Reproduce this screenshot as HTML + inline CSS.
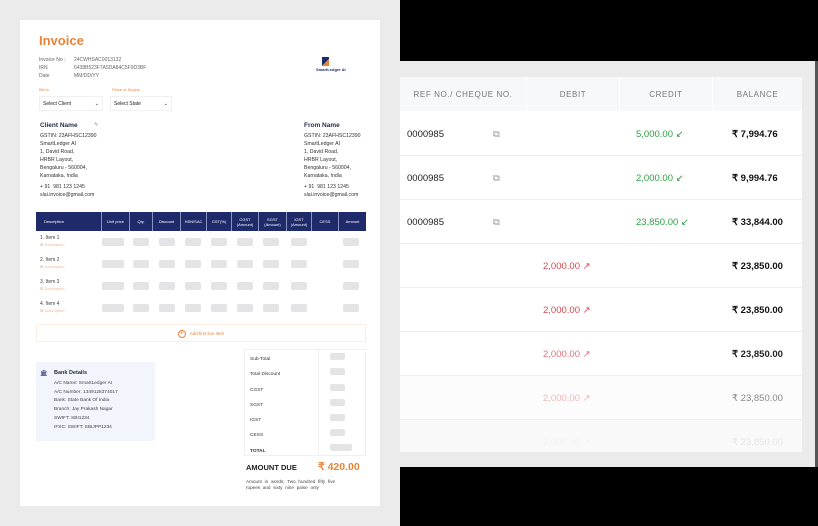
<!DOCTYPE html>
<html><head><meta charset="utf-8"><style>
*{margin:0;padding:0;box-sizing:border-box}
body{width:818px;height:526px;background:#ebebeb;position:relative;overflow:hidden;font-family:"Liberation Sans",sans-serif}
.a{position:absolute;white-space:nowrap}
.card{position:absolute;left:20px;top:20px;width:360px;height:486px;background:#fff}
.g{color:#666;font-size:5px}
.t{color:#333;font-size:5.2px;line-height:8px}
.ph{position:absolute;height:8px;background:#e4e4e6;border-radius:2px}
.th{position:absolute;top:0;height:19px;color:#fff;font-size:4px;text-align:center;display:flex;align-items:center;justify-content:center;border-left:1px solid #8a92c0;line-height:5px}
.rt{position:absolute;left:400px;top:77px;width:402px;background:#fff}
.hd{position:absolute;top:0;height:34px;background:#f7f8fa;color:#777;font-size:8px;letter-spacing:0.6px;display:flex;align-items:center;justify-content:center}
.row{position:absolute;left:0;width:402px;height:44px;border-bottom:1px solid #eceef0;font-size:9.5px}
.row span{position:absolute;top:17px}
</style></head><body>
<div class="a" style="left:400px;top:0;width:418px;height:61px;background:#000"></div>
<div class="a" style="left:400px;top:467px;width:418px;height:59px;background:#000"></div>
<div class="a" style="left:815px;top:61px;width:3px;height:406px;background:#555"></div>

<div class="card">
<div class="a" style="left:19px;top:13px;font-size:13px;font-weight:bold;color:#e8843a">Invoice</div>
<div class="a g" style="left:19px;top:36px;line-height:8px">Invoice No :<br>IRN<br>Date</div>
<div class="a g" style="left:54px;top:36px;line-height:8px">24CWHSAC0013132<br>6438B523F7A5DA84C5F9D3BF<br>MM/DD/YY</div>
<div class="a" style="left:302px;top:37px;width:7px;height:9px;background:linear-gradient(135deg,#1f2a6b 55%,#e8843a 55%)"></div>
<div class="a" style="left:296px;top:47px;font-size:4px;font-weight:bold;color:#1f2a6b">SmartLedger AI</div>
<div class="a" style="left:19px;top:67px;font-size:4px;color:#e8843a">Bill to</div>
<div class="a" style="left:92px;top:67px;font-size:4px;color:#e8843a">Place of Supply</div>
<div class="a" style="left:19px;top:76px;width:64px;height:15px;border:1px solid #f0f0f0;font-size:5px;color:#222;padding:4px 3px">Select Client<span style="float:right">⌄</span></div>
<div class="a" style="left:90px;top:76px;width:62px;height:15px;border:1px solid #f0f0f0;font-size:5px;color:#222;padding:4px 3px">Select State<span style="float:right">⌄</span></div>
<div class="a" style="left:20px;top:102px;font-size:6.5px;font-weight:bold;color:#1f2a44">Client Name</div>
<div class="a" style="left:74px;top:102px;font-size:5px;color:#888">✎</div>
<div class="a t" style="left:20px;top:112px">GSTIN: 23AFHSC12390<br>SmartLedger AI<br>1, David Road,<br>HRBR Layout,<br>Bengaluru - 560004,<br>Karnataka, India</div>
<div class="a t" style="left:20px;top:163px">+ 91 &nbsp;981 123 1245<br>slai.invoice@gmail.com</div>
<div class="a" style="left:284px;top:102px;font-size:6.5px;font-weight:bold;color:#1f2a44">From Name</div>
<div class="a t" style="left:284px;top:112px">GSTIN: 23AFHSC12390<br>SmartLedger AI<br>1, David Road,<br>HRBR Layout,<br>Bengaluru - 560004,<br>Karnataka, India</div>
<div class="a t" style="left:284px;top:163px">+ 91 &nbsp;981 123 1245<br>slai.invoice@gmail.com</div>

<div class="a" style="left:16px;top:192px;width:330px;height:19px;background:#1f2a6b">
<div class="th" style="left:0;width:65px;border:0;justify-content:flex-start;padding-left:8px">Description</div>
<div class="th" style="left:65px;width:28px">Unit price</div>
<div class="th" style="left:93px;width:23px">Qty.</div>
<div class="th" style="left:116px;width:28px">Discount</div>
<div class="th" style="left:144px;width:26px">HSN/SAC</div>
<div class="th" style="left:170px;width:25px">GST(%)</div>
<div class="th" style="left:195px;width:27px">CGST<br>(Amount)</div>
<div class="th" style="left:222px;width:28px">SGST<br>(Amount)</div>
<div class="th" style="left:250px;width:25px">IGST<br>(Amount)</div>
<div class="th" style="left:275px;width:27px">CESS</div>
<div class="th" style="left:302px;width:28px">Amount</div>
</div>
<div class="a" style="left:20px;top:207px;font-size:5px;color:#444;line-height:22px">1. Item 1<br>2. Item 2<br>3. Item 3<br>4. Item 4</div>
<div class="a" style="left:20px;top:214px;font-size:4px;color:#e9b9a0;line-height:22px">⊠ Description<br>⊠ Description<br>⊠ Description<br>⊠ Description</div>
<div style="position:absolute;left:0;top:0">
<div class="ph" style="left:82px;top:218px;width:22px"></div><div class="ph" style="left:113px;top:218px;width:16px"></div><div class="ph" style="left:139px;top:218px;width:16px"></div><div class="ph" style="left:165px;top:218px;width:16px"></div><div class="ph" style="left:191px;top:218px;width:16px"></div><div class="ph" style="left:217px;top:218px;width:16px"></div><div class="ph" style="left:243px;top:218px;width:16px"></div><div class="ph" style="left:271px;top:218px;width:16px"></div><div class="ph" style="left:323px;top:218px;width:16px"></div>
<div class="ph" style="left:82px;top:240px;width:22px"></div><div class="ph" style="left:113px;top:240px;width:16px"></div><div class="ph" style="left:139px;top:240px;width:16px"></div><div class="ph" style="left:165px;top:240px;width:16px"></div><div class="ph" style="left:191px;top:240px;width:16px"></div><div class="ph" style="left:217px;top:240px;width:16px"></div><div class="ph" style="left:243px;top:240px;width:16px"></div><div class="ph" style="left:271px;top:240px;width:16px"></div><div class="ph" style="left:323px;top:240px;width:16px"></div>
<div class="ph" style="left:82px;top:262px;width:22px"></div><div class="ph" style="left:113px;top:262px;width:16px"></div><div class="ph" style="left:139px;top:262px;width:16px"></div><div class="ph" style="left:165px;top:262px;width:16px"></div><div class="ph" style="left:191px;top:262px;width:16px"></div><div class="ph" style="left:217px;top:262px;width:16px"></div><div class="ph" style="left:243px;top:262px;width:16px"></div><div class="ph" style="left:271px;top:262px;width:16px"></div><div class="ph" style="left:323px;top:262px;width:16px"></div>
<div class="ph" style="left:82px;top:284px;width:22px"></div><div class="ph" style="left:113px;top:284px;width:16px"></div><div class="ph" style="left:139px;top:284px;width:16px"></div><div class="ph" style="left:165px;top:284px;width:16px"></div><div class="ph" style="left:191px;top:284px;width:16px"></div><div class="ph" style="left:217px;top:284px;width:16px"></div><div class="ph" style="left:243px;top:284px;width:16px"></div><div class="ph" style="left:271px;top:284px;width:16px"></div><div class="ph" style="left:323px;top:284px;width:16px"></div>
</div>
<div class="a" style="left:16px;top:304px;width:330px;height:18px;border:1px solid #fbeee3;font-size:4.5px;color:#e8843a;text-align:center;padding-top:5px"><span style="display:inline-block;width:8px;height:8px;border:1px solid #e8843a;border-radius:50%;font-size:7px;line-height:6px;vertical-align:middle;margin-right:4px">+</span>Add first line item</div>

<div class="a" style="left:16px;top:342px;width:119px;height:79px;background:#f3f5fd"></div>
<div class="a" style="left:20px;top:350px;font-size:6px;color:#1f2a6b">🏛</div>
<div class="a" style="left:34px;top:350px;font-size:5.5px;font-weight:bold;color:#1f2a44">Bank Details</div>
<div class="a" style="left:34px;top:360px;font-size:4.8px;color:#444;line-height:8.7px">A/C Name: SmartLedger AI<br>A/C Number: 1349128374017<br>Bank: State Bank Of India<br>Branch: Jay Prakash Nagar<br>SWIFT: SBI1234<br>IFSC: SWIFT: SBIJPP1234</div>

<div class="a" style="left:224px;top:329px;width:122px;height:107px;border:1px solid #f0f0f0"></div>
<div class="a" style="left:298px;top:329px;width:1px;height:107px;background:#f0f0f0"></div>
<div class="a" style="left:230px;top:332px;font-size:4.8px;color:#333;line-height:15.3px">Sub-Total<br>Total Discount<br>CGST<br>SGST<br>IGST<br>CESS<br><b>TOTAL</b></div>
<div class="ph" style="left:310px;top:333px;width:15px;height:7px"></div><div class="ph" style="left:310px;top:348px;width:15px;height:7px"></div><div class="ph" style="left:310px;top:364px;width:15px;height:7px"></div><div class="ph" style="left:310px;top:379px;width:15px;height:7px"></div><div class="ph" style="left:310px;top:394px;width:15px;height:7px"></div><div class="ph" style="left:310px;top:409px;width:15px;height:7px"></div><div class="ph" style="left:310px;top:424px;width:22px;height:7px"></div>
<div class="a" style="left:226px;top:443px;font-size:7.5px;font-weight:bold;color:#222">AMOUNT DUE</div>
<div class="a" style="left:298px;top:441px;font-size:10.5px;font-weight:bold;color:#e8843a">₹ 420.00</div>
<div class="a" style="left:226px;top:459px;font-size:4.6px;color:#444;line-height:6px;word-spacing:1.5px">Amount in words: Two hundred fifty five<br>rupees and sixty nine paise only</div>
</div>

<div class="rt" style="height:375px">
<div class="hd" style="left:0;width:126px">REF NO./ CHEQUE NO.</div>
<div class="hd" style="left:127px;width:92px">DEBIT</div>
<div class="hd" style="left:220px;width:92px">CREDIT</div>
<div class="hd" style="left:313px;width:89px">BALANCE</div>
<div class="row" style="top:35px"><span style="left:7px;color:#222">0000985</span><span style="left:93px;color:#999">⧉</span><span style="left:236px;color:#2ea043">5,000.00 ↙</span><span style="left:332px;color:#111;font-weight:bold">₹ 7,994.76</span></div>
<div class="row" style="top:79px"><span style="left:7px;color:#222">0000985</span><span style="left:93px;color:#999">⧉</span><span style="left:236px;color:#2ea043">2,000.00 ↙</span><span style="left:332px;color:#111;font-weight:bold">₹ 9,994.76</span></div>
<div class="row" style="top:123px"><span style="left:7px;color:#222">0000985</span><span style="left:93px;color:#999">⧉</span><span style="left:236px;color:#2ea043">23,850.00 ↙</span><span style="left:332px;color:#111;font-weight:bold">₹ 33,844.00</span></div>
<div class="row" style="top:167px"><span style="left:143px;color:#d9474f">2,000.00 ↗</span><span style="left:332px;color:#111;font-weight:bold">₹ 23,850.00</span></div>
<div class="row" style="top:211px"><span style="left:143px;color:#d9474f">2,000.00 ↗</span><span style="left:332px;color:#111;font-weight:bold">₹ 23,850.00</span></div>
<div class="row" style="top:255px"><span style="left:143px;color:#e0737a">2,000.00 ↗</span><span style="left:332px;color:#222;font-weight:bold">₹ 23,850.00</span></div>
<div class="row" style="top:299px;background:#fcfcfc"><span style="left:143px;color:#f0b5b8">2,000.00 ↗</span><span style="left:332px;color:#888">₹ 23,850.00</span></div>
<div class="row" style="top:343px;height:32px;background:#f9f9f9;border:0"><span style="left:143px;color:#f4f4f4">2,000.00 ↗</span><span style="left:332px;color:#e6e6e6">₹ 23,850.00</span></div>
</div>
</body></html>
